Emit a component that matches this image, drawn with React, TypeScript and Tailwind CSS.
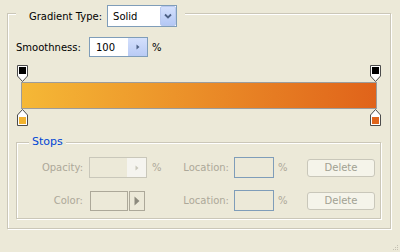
import React from 'react';

const etched = "border border-[#cbc7b8] shadow-[inset_1px_1px_0_#fff,1px_1px_0_#fff]";

function TopStop() {
    return (
        <svg width="11" height="17" viewBox="0 0 11 17">
            <path d="M0.5 0.5H10.5V11L5.5 16.5L0.5 11Z" fill="#fff" stroke="#4c4c4c" />
            <rect x="2" y="2" width="7" height="7" fill="#000" />
        </svg>
    );
}

function BottomStop({ color }: { color: string }) {
    return (
        <svg width="11" height="17" viewBox="0 0 11 17">
            <path d="M5.5 0.5L10.5 6V16.5H0.5V6Z" fill="#fff" stroke="#4c4c4c" />
            <rect x="2" y="8" width="7" height="7" fill={color} />
        </svg>
    );
}

function DeleteButton() {
    return (
        <button
            disabled
            className="w-[68px] h-[18px] rounded-[3px] border border-[#c9c7ba] bg-[#f5f4ea] text-[#a1a192] flex items-center justify-center"
        >
            Delete
        </button>
    );
}

export default function App() {
    return (
        <div className="w-[400px] h-[252px] bg-[#ece9d8] relative overflow-hidden font-['DejaVu_Sans',sans-serif] text-[10px] leading-[13px] text-black pt-[13px] pl-[7px]">
            {/* Outer group */}
            <div className={`w-[384px] h-[216px] ${etched}`}>
                {/* Header: Gradient Type */}
                <div className="-mt-[9px] ml-[8px] w-fit h-[22px] flex items-center bg-[#ece9d8] pl-[13px] pr-[8px]">
                    <span>Gradient Type:</span>
                    <div className="ml-[5px] w-[70px] h-[22px] border border-[#7f9db9] bg-white flex items-center">
                        <span className="pl-[5px] flex-1">Solid</span>
                        <div className="w-[16px] h-[20px] rounded-[2px] border border-[#b9c9ef] bg-[linear-gradient(#d4e0fc,#b4c8f5)] flex items-center justify-center">
                            <svg width="8" height="6" viewBox="0 0 8 6">
                                <path d="M1 1.5L4 4.5L7 1.5" fill="none" stroke="#4d6185" strokeWidth="1.8" />
                            </svg>
                        </div>
                    </div>
                </div>

                {/* Smoothness */}
                <div className="mt-[10px] ml-[8px] h-[20px] flex items-center">
                    <span className="w-[73px]">Smoothness:</span>
                    <div className="w-[59px] h-[20px] border border-[#7f9db9] bg-white flex items-center">
                        <span className="pl-[6px] flex-1">100</span>
                        <div className="w-[19px] h-[18px] bg-[linear-gradient(#d4e0fc,#b9cbf5)] flex items-center justify-center">
                            <svg width="4" height="6" viewBox="0 0 4 6">
                                <path d="M0.5 0.5L3.5 3L0.5 5.5Z" fill="#4d6185" />
                            </svg>
                        </div>
                    </div>
                    <span className="ml-[4px]">%</span>
                </div>

                {/* Gradient bar with stops */}
                <div className="mt-[8px] ml-[8px] w-[366px]">
                    <div className="h-[17px] px-[1px] flex justify-between">
                        <TopStop />
                        <TopStop />
                    </div>
                    <div className="mx-[5px] h-[27px] border border-[#9c9c9c] bg-[linear-gradient(to_right,#f5b836,#e0631a)]" />
                    <div className="h-[17px] px-[1px] flex justify-between">
                        <BottomStop color="#f2b32f" />
                        <BottomStop color="#e0651c" />
                    </div>
                </div>

                {/* Stops group */}
                <div className={`mt-[16px] ml-[8px] w-[365px] h-[77px] ${etched}`}>
                    <div className="-mt-[8px] ml-[12px] w-fit px-[3px] bg-[#ece9d8] text-[11px] leading-[13px] text-[#0046d5]">
                        Stops
                    </div>

                    <div className="mt-[9px] h-[21px] flex items-center text-[#aca899]">
                        <span className="w-[66px] mr-[6px] text-right">Opacity:</span>
                        <div className="w-[58px] h-[21px] border border-[#c9c7ba] flex">
                            <div className="flex-1" />
                            <div className="w-[19px] bg-[#f5f4ef] flex items-center justify-center">
                                <svg width="4" height="6" viewBox="0 0 4 6">
                                    <path d="M0.5 0.5L3.5 3L0.5 5.5Z" fill="#c9c7ba" />
                                </svg>
                            </div>
                        </div>
                        <span className="w-[28px] pl-[5px]">%</span>
                        <span className="w-[54px] text-right">Location:</span>
                        <div className="ml-[5px] w-[40px] h-[21px] border border-[#7f9db9]" />
                        <span className="w-[33px] pl-[4px]">%</span>
                        <DeleteButton />
                    </div>

                    <div className="mt-[12px] h-[21px] flex items-center text-[#aca899]">
                        <span className="w-[66px] mr-[6px] text-right">Color:</span>
                        <div className="w-[58px] flex items-center">
                            <div className="ml-[1px] w-[38px] h-[20px] border border-[#aca899]" />
                            <div className="ml-[1px] w-[16px] h-[20px] border border-[#aca899] flex items-center justify-center">
                                <svg width="6" height="10" viewBox="0 0 6 10">
                                    <path d="M0.5 0.5L5.5 5L0.5 9.5Z" fill="#8c8a7d" />
                                </svg>
                            </div>
                        </div>
                        <span className="w-[28px]" />
                        <span className="w-[54px] text-right">Location:</span>
                        <div className="ml-[5px] w-[40px] h-[21px] border border-[#7f9db9]" />
                        <span className="w-[33px] pl-[4px]">%</span>
                        <DeleteButton />
                    </div>
                </div>
            </div>

            {/* Resize grip */}
            <svg className="absolute right-[1px] bottom-[1px]" width="6" height="6" viewBox="0 0 6 6">
                <rect x="4" y="0" width="1" height="1" fill="#c4c0b2" />
                <rect x="2" y="2" width="1" height="1" fill="#c4c0b2" />
                <rect x="4" y="2" width="1" height="1" fill="#c4c0b2" />
                <rect x="0" y="4" width="1" height="1" fill="#c4c0b2" />
                <rect x="2" y="4" width="1" height="1" fill="#c4c0b2" />
                <rect x="4" y="4" width="1" height="1" fill="#c4c0b2" />
            </svg>
        </div>
    );
}
